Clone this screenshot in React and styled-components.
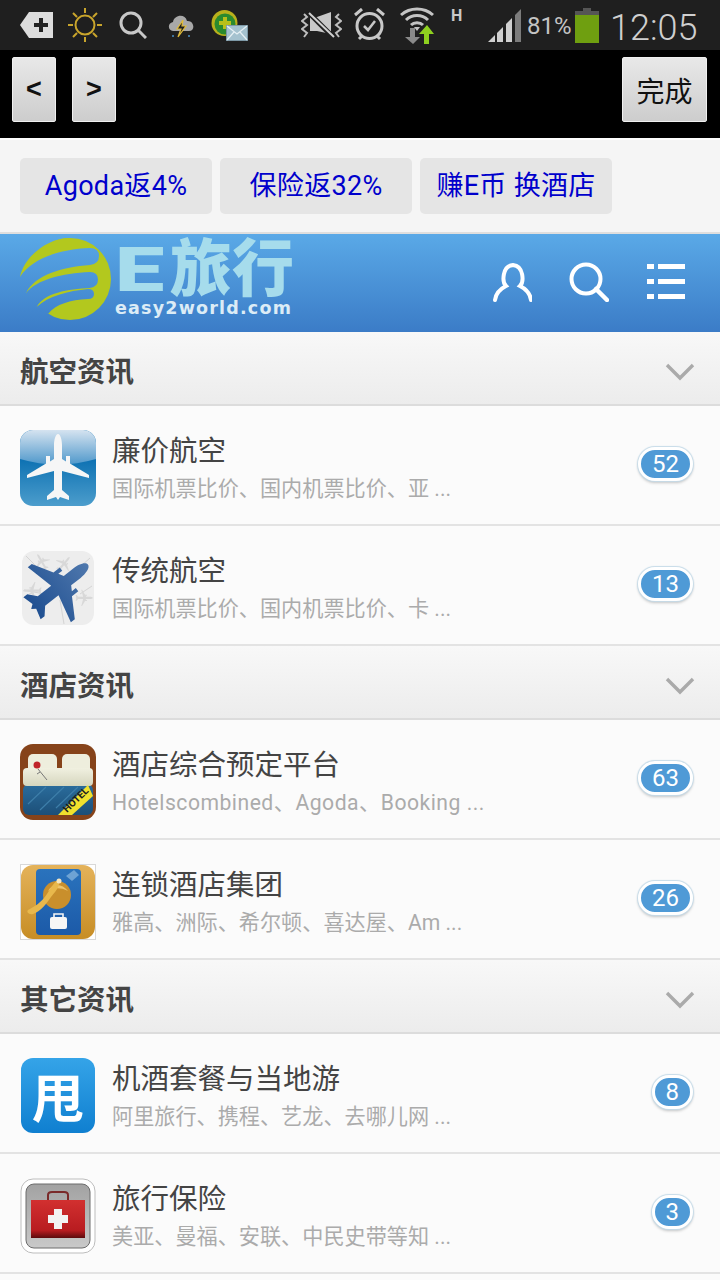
import React from "react";
import styled, { createGlobalStyle } from "styled-components";

const GlobalStyle = createGlobalStyle`
    html, body {
        margin: 0;
        padding: 0;
        background: #fbfbfb;
        font-family: Roboto, "Noto Sans CJK SC", sans-serif;
    }
`;

const Page = styled.div`
    width: 720px;
    height: 1280px;
    overflow: hidden;
    background: #fbfbfb;
`;

const StatusBar = styled.div`
    height: 50px;
    background: #1f1f1f;
    display: flex;
    align-items: center;
    padding-left: 20px;
`;

const StatusSvg = styled.svg`
    display: block;
    flex: none;
    margin-left: ${(p) => p.$ml || 0}px;
`;

const NetType = styled.span`
    align-self: flex-start;
    margin: 6px 0 0 17px;
    width: 12px;
    font-size: 16px;
    font-weight: 700;
    color: #c8c8c8;
`;

const Percent = styled.span`
    margin: 2px 0 0 5px;
    width: 43px;
    font-size: 24px;
    color: #c4c4c4;
    white-space: nowrap;
`;

const Clock = styled.span`
    margin: 6px 0 0 11px;
    font-size: 36px;
    font-weight: 300;
    color: #cfcfcf;
    white-space: nowrap;
`;

const Toolbar = styled.div`
    height: 88px;
    box-sizing: border-box;
    background: #000;
    display: flex;
    align-items: flex-start;
    gap: 16px;
    padding: 7px 13px 0 12px;
`;

const ToolButton = styled.button`
    height: 65px;
    width: ${(p) => p.$width}px;
    margin-left: ${(p) => (p.$push ? "auto" : "0")};
    padding: 0;
    border: 1px solid #f0f0f0;
    border-radius: 2px;
    background: linear-gradient(#e8e8e8, #cdcdcd);
    color: #111;
    font-family: "Liberation Sans", "Noto Sans CJK SC", sans-serif;
    font-size: ${(p) => p.$size}px;
    font-weight: ${(p) => p.$weight || 400};
`;

const PromoRow = styled.div`
    height: 96px;
    box-sizing: border-box;
    background: #f5f5f5;
    border-top: 2px solid #fff;
    border-bottom: 2px solid #dedede;
    display: flex;
    gap: 8px;
    padding: 18px 20px 0;
`;

const PromoLink = styled.a`
    width: 192px;
    height: 56px;
    box-sizing: border-box;
    padding-bottom: 5px;
    border-radius: 5px;
    background: #e5e5e5;
    color: #0000cc;
    font-size: 27px;
    letter-spacing: 0.3px;
    display: flex;
    align-items: center;
    justify-content: center;
    white-space: pre;
`;

const Header = styled.div`
    height: 98px;
    box-sizing: border-box;
    background: linear-gradient(#5aa9e7, #3b7cc7);
    display: flex;
    align-items: flex-start;
    padding: 4px 34px 0 20px;
`;

const LogoMark = styled.svg`
    display: block;
    flex: none;
`;

const LogoWords = styled.div`
    margin-left: 3px;
    width: 182px;
    display: flex;
    flex-direction: column;
`;

const LogoTitle = styled.div`
    height: 60px;
    line-height: 64px;
    font-size: 62px;
    font-weight: 900;
    color: #a6dcec;
    white-space: nowrap;
    display: flex;
`;

const LogoLetter = styled.span`
    display: block;
    width: 55px;
    transform: scaleX(1.42);
    transform-origin: left center;
`;

const LogoUrl = styled.div`
    margin-top: 1px;
    font-family: "DejaVu Sans", sans-serif;
    font-size: 17.5px;
    line-height: 18px;
    font-weight: 700;
    letter-spacing: 1.2px;
    color: #dcecf6;
    white-space: nowrap;
`;

const HeaderIcons = styled.div`
    margin-left: auto;
    margin-top: 24px;
    display: flex;
    gap: 37px;
`;

const SectionHead = styled.div`
    height: 74px;
    box-sizing: border-box;
    background: linear-gradient(#f8f8f8, #ececec);
    border-bottom: 2px solid #dcdcdc;
    display: flex;
    align-items: center;
    justify-content: space-between;
    padding: 8px 25px 0 20px;
`;

const SectionTitle = styled.h2`
    margin: 0 0 6px;
    font-size: 28.5px;
    font-weight: 700;
    color: #444;
`;

const Row = styled.div`
    height: 120px;
    box-sizing: border-box;
    border-bottom: 2px solid #e3e3e3;
    display: flex;
    align-items: center;
    padding: 6px 27px 0 20px;
`;

const RowIcon = styled.svg`
    display: block;
    flex: none;
    width: 76px;
    height: 76px;
`;

const RowText = styled.div`
    margin-left: 16px;
    flex: 1;
    min-width: 0;
`;

const RowTitle = styled.div`
    font-size: 28.5px;
    line-height: 40px;
    color: #444;
    white-space: nowrap;
`;

const RowSub = styled.div`
    font-size: 21.15px;
    line-height: 30px;
    margin-top: 2px;
    letter-spacing: ${(p) => (p.$latin ? "0.5px" : "0")};
    color: #ababab;
    white-space: nowrap;
`;

const Badge = styled.span`
    flex: none;
    height: 34px;
    box-sizing: border-box;
    margin-bottom: 8px;
    padding: 0 11px;
    border: 3px solid #fff;
    border-radius: 17px;
    background: #4f9ad6;
    color: #fff;
    font-size: 24px;
    line-height: 28px;
    box-shadow: 0 0 1px 1px #c6dbe8, 0 2px 3px rgba(0, 0, 0, 0.22);
`;

const PLANE = "M38 4C35.5 4 34 10 34 15V29L30 31.5V26H26V33.5L7 45V48L34 41V60L27 66V70L36 67L38 70L40 67L49 70V66L42 60V41L69 48V45L50 33.5V26H46V31.5L42 29V15C42 10 40.5 4 38 4Z";
const PLANE_WIDE = "M38 0C34 0 32 8 32 14V26L27 29V24H23V32L3 44V49L32 42V59L24 66V71L35 68L38 72L41 68L52 71V66L44 59V42L73 49V44L53 32V24H49V29L44 26V14C44 8 42 0 38 0Z";

const PlaneBlueIcon = () => (
    <RowIcon viewBox="0 0 76 76">
        <defs>
            <linearGradient id="pb" x1="0" y1="0" x2="0" y2="1">
                <stop offset="0.35" stopColor="#0a6fb1" />
                <stop offset="1" stopColor="#4c9dcc" />
            </linearGradient>
            <linearGradient id="pg" x1="0" y1="0" x2="0" y2="1">
                <stop offset="0" stopColor="#d5e3f0" />
                <stop offset="1" stopColor="#4f98cb" />
            </linearGradient>
        </defs>
        <rect width="76" height="76" rx="13" fill="url(#pb)" />
        <path d="M0 13A13 13 0 0 1 13 0H63A13 13 0 0 1 76 13V29Q38 40 0 29Z" fill="url(#pg)" />
        <path d={PLANE} fill="#f6f6f6" />
    </RowIcon>
);

const PlaneMapIcon = () => (
    <RowIcon viewBox="0 0 76 76">
        <defs>
            <linearGradient id="pm" x1="0" y1="0" x2="0" y2="1">
                <stop offset="0" stopColor="#4f78ad" />
                <stop offset="1" stopColor="#1f4f91" />
            </linearGradient>
        </defs>
        <rect x="2" y="1" width="72" height="74" rx="12" fill="#ededed" />
        <g fill="none" stroke="#d4d4d4" strokeWidth="1">
            <path d="M6 6L30 30M70 8L52 24M4 40L24 44M40 50L44 74M60 44L72 36" />
        </g>
        <g fill="#d8d8d8">
            <path d={PLANE} transform="translate(2 30) scale(.28) rotate(-90 38 38)" />
            <path d={PLANE} transform="translate(12 2) scale(.26) rotate(-30 38 38)" />
            <path d={PLANE} transform="translate(34 4) scale(.26) rotate(40 38 38)" />
            <path d={PLANE} transform="translate(54 38) scale(.26) rotate(90 38 38)" />
        </g>
        <path d={PLANE_WIDE} fill="url(#pm)" transform="rotate(52 38 38)" />
    </RowIcon>
);

const HotelBedIcon = () => (
    <RowIcon viewBox="0 0 76 76">
        <defs>
            <linearGradient id="hb" x1="0" y1="0" x2="0" y2="1">
                <stop offset="0" stopColor="#2b6d9d" />
                <stop offset="1" stopColor="#1c4f78" />
            </linearGradient>
            <linearGradient id="hm" x1="0" y1="0" x2="0" y2="1">
                <stop offset="0" stopColor="#f0f0e0" />
                <stop offset="1" stopColor="#d6d6be" />
            </linearGradient>
        </defs>
        <rect width="76" height="76" rx="13" fill="#86431a" />
        <rect x="8" y="10" width="29" height="22" rx="5" fill="#eeeedd" />
        <rect x="42" y="10" width="28" height="22" rx="5" fill="#eeeedd" />
        <rect x="3" y="40" width="70" height="31" rx="6" fill="url(#hb)" />
        <rect x="3" y="24" width="70" height="18" rx="4" fill="url(#hm)" />
        <g stroke="#3d7ea9" strokeWidth="1.2">
            <path d="M8 60L26 43M20 66L44 43M36 64L58 43" />
        </g>
        <circle cx="17" cy="21" r="3.5" fill="#c0242a" />
        <path d="M18 25L27 36M20 28L17 30" stroke="#777" strokeWidth="1" />
        <path d="M38 71H52L73 52L68 41Z" fill="#f1e12d" />
        <text x="0" y="0" transform="translate(47 69) rotate(-44)" fontSize="10" fontWeight="700" fontFamily="Roboto, sans-serif" fill="#1d1d1d">HOTEL</text>
    </RowIcon>
);

const DoorHangerIcon = () => (
    <RowIcon viewBox="0 0 76 76">
        <defs>
            <linearGradient id="dg" x1="0" y1="0" x2="0" y2="1">
                <stop offset="0" stopColor="#e4b25a" />
                <stop offset="1" stopColor="#c78d25" />
            </linearGradient>
            <linearGradient id="db" x1="0" y1="0" x2="0" y2="1">
                <stop offset="0" stopColor="#2a73bd" />
                <stop offset="1" stopColor="#1c5aa8" />
            </linearGradient>
        </defs>
        <rect x="0.5" y="0.5" width="75" height="75" fill="#fff" stroke="#d8d8d8" />
        <rect x="1" y="1" width="74" height="74" rx="12" fill="url(#dg)" />
        <rect x="16" y="5" width="45" height="66" rx="4" fill="url(#db)" />
        <circle cx="37" cy="31" r="14" fill="#c98f2c" />
        <path d="M28 27C32 19 42 19 48 27C40 23 33 24 28 27Z" fill="#edc46c" />
        <path d="M38 16C41 19 38 25 31 33C27 39 21 47 13 50C9 51 6 48 8 46C14 43 22 38 27 30C31 24 34 18 38 16Z" fill="#e8b84c" />
        <circle cx="39" cy="17" r="2.5" fill="#f4e6c0" />
        <rect x="30" y="53" width="17" height="12" rx="2" fill="#f6f6f6" />
        <path d="M34 53V50H43V53" fill="none" stroke="#f6f6f6" strokeWidth="1.6" />
        <path d="M46 12L54 6L59 11L52 17Z" fill="#6ea3d4" />
    </RowIcon>
);

const ShuaiIcon = () => (
    <RowIcon viewBox="0 0 76 76">
        <defs>
            <linearGradient id="sb" x1="0" y1="0" x2="0" y2="1">
                <stop offset="0" stopColor="#35a4e8" />
                <stop offset="1" stopColor="#0f7fd0" />
            </linearGradient>
        </defs>
        <rect x="1" y="0" width="74" height="75" rx="12" fill="url(#sb)" />
        <text x="38" y="60" textAnchor="middle" fontSize="52" fontWeight="700" fontFamily="'Noto Sans CJK SC', sans-serif" fill="#fff">甩</text>
    </RowIcon>
);

const MedicalIcon = () => (
    <RowIcon viewBox="0 0 76 76">
        <defs>
            <linearGradient id="mr" x1="0" y1="0" x2="0" y2="1">
                <stop offset="0" stopColor="#d23030" />
                <stop offset="0.8" stopColor="#b81c20" />
                <stop offset="1" stopColor="#5c0a0c" />
            </linearGradient>
            <linearGradient id="mg" x1="0" y1="0" x2="0" y2="1">
                <stop offset="0" stopColor="#a2a2a2" />
                <stop offset="1" stopColor="#c9c9c9" />
            </linearGradient>
        </defs>
        <rect x="1" y="1" width="74" height="74" rx="12" fill="#fff" stroke="#bdbdbd" />
        <rect x="6" y="6" width="64" height="64" rx="8" fill="url(#mg)" stroke="#6c6c6c" />
        <path d="M28 22V17C28 14.500 30 14 32 14H44C46 14 48 14.500 48 17V22" fill="none" stroke="#7a2a2a" strokeWidth="2" />
        <path d="M11 22H65V60H11Z" fill="url(#mr)" />
        <path d="M34 36H42V42H48V50H42V56H34V50H28V42H34Z" fill="#f3f3f3" transform="translate(0 -5)" />
    </RowIcon>
);

const Chevron = () => (
    <svg width="30" height="18" viewBox="0 0 30 18">
        <path d="M2 2L15 15L28 2" fill="none" stroke="#aaa" strokeWidth="3.4" />
    </svg>
);

const sections = [
    {
        title: "航空资讯",
        rows: [
            { Icon: PlaneBlueIcon, title: "廉价航空", sub: "国际机票比价、国内机票比价、亚 ...", count: 52 },
            { Icon: PlaneMapIcon, title: "传统航空", sub: "国际机票比价、国内机票比价、卡 ...", count: 13 },
        ],
    },
    {
        title: "酒店资讯",
        rows: [
            { Icon: HotelBedIcon, title: "酒店综合预定平台", sub: "Hotelscombined、Agoda、Booking ...", count: 63, latin: true },
            { Icon: DoorHangerIcon, title: "连锁酒店集团", sub: "雅高、洲际、希尔顿、喜达屋、Am ...", count: 26 },
        ],
    },
    {
        title: "其它资讯",
        rows: [
            { Icon: ShuaiIcon, title: "机酒套餐与当地游", sub: "阿里旅行、携程、艺龙、去哪儿网 ...", count: 8 },
            { Icon: MedicalIcon, title: "旅行保险", sub: "美亚、曼福、安联、中民史带等知 ...", count: 3 },
        ],
    },
];

const StatusIcons = () => (
    <>
        <StatusSvg width="34" height="28" viewBox="0 0 34 28">
            <path d="M9 1H33V27H9L0 14Z" fill="#dcdcdc" />
            <path d="M21 7V21M14 14H28" stroke="#222" strokeWidth="4" />
        </StatusSvg>
        <StatusSvg $ml={14} width="34" height="34" viewBox="0 0 34 34">
            <g stroke="#c9a52c" strokeWidth="2" fill="none">
                <circle cx="17" cy="17" r="9.500" />
                <path d="M17 0V5M17 29V34M0 17H5M29 17H34M5 5L9 9M25 25L29 29M29 5L25 9M9 25L5 29" />
            </g>
        </StatusSvg>
        <StatusSvg $ml={17} width="28" height="28" viewBox="0 0 28 28">
            <circle cx="12" cy="12" r="10" fill="none" stroke="#c8c8c8" strokeWidth="3" />
            <path d="M19 19L27 27" stroke="#c8c8c8" strokeWidth="3" />
        </StatusSvg>
        <StatusSvg $ml={20} width="28" height="28" viewBox="0 0 28 28">
            <path d="M6 20C1 20 0 12 6 11C7 4 18 2 20 10C27 9 29 20 22 20Z" fill="#a8a8a8" />
            <path d="M16 9L10 18H14L11 26L19 15H15Z" fill="#1f1f1f" stroke="#e0bb3a" strokeWidth="1.200" />
            <path d="M6 24V26M22 24V26" stroke="#4a90c8" strokeWidth="1.500" />
        </StatusSvg>
        <StatusSvg $ml={16} width="37" height="31" viewBox="0 0 37 31">
            <circle cx="13.500" cy="13" r="13" fill="#b9b01c" />
            <circle cx="14" cy="14" r="10.500" fill="#2b8a2e" />
            <path d="M14 7V19M8 13H20" stroke="#b9c01a" strokeWidth="4" />
            <rect x="15.500" y="15.500" width="21" height="15" fill="#a5c2cf" stroke="#7d98a6" />
            <path d="M16 16L26 24L36 16M16 30L23 22M36 30L29 22" fill="none" stroke="#e6f0f4" strokeWidth="1.200" />
        </StatusSvg>
        <StatusSvg $ml={53} width="41" height="26" viewBox="0 0 41 26">
            <g fill="none" stroke="#bdbdbd" strokeWidth="2">
                <path d="M3 2L6 5L1 9L6 13L1 17L6 21L3 25M38 2L35 5L40 9L35 13L40 17L35 21L38 25" />
            </g>
            <path d="M9 5H16L30 0V22L16 19H9Z" fill="#c8c8c8" />
            <path d="M8 1L33 26" stroke="#1f1f1f" strokeWidth="5" />
            <path d="M8 1L33 25" stroke="#d0d0d0" strokeWidth="2" />
        </StatusSvg>
        <StatusSvg $ml={12} width="31" height="34" viewBox="0 0 31 34">
            <circle cx="15.500" cy="18" r="12.500" fill="none" stroke="#c8c8c8" strokeWidth="3" />
            <path d="M1 7L8 1M30 7L23 1M5 31L8 28M26 31L23 28" stroke="#c8c8c8" strokeWidth="3" />
            <path d="M10 18L14 22L21 13" fill="none" stroke="#c8c8c8" strokeWidth="2.500" />
        </StatusSvg>
        <StatusSvg $ml={15} width="34" height="37" viewBox="0 0 34 37">
            <g fill="none" stroke="#c4c4c4" strokeWidth="3">
                <path d="M1 8C10 0 24 0 33 8M6 13C12 7 22 7 28 13M11 18C14 15 20 15 23 18" />
            </g>
            <path d="M17 24L14 20H20Z" fill="#c4c4c4" />
            <path d="M10 21V30H5L13 37L20 30H15V21Z" fill="#8a8a8a" />
            <path d="M24 37V27H19L27 18L34 27H29V37Z" fill="#8ed01f" />
        </StatusSvg>
        <NetType>H</NetType>
        <StatusSvg $ml={25} width="34" height="33" viewBox="0 0 34 33">
            <path d="M0 33L7 26V33Z" fill="#d0d0d0" />
            <path d="M9 24L15 18V33H9Z" fill="#d0d0d0" />
            <path d="M18 15L24 9V33H18Z" fill="#d0d0d0" />
            <path d="M27 6L33 0V33H27Z" fill="#7c7c7c" />
        </StatusSvg>
        <Percent>81%</Percent>
        <StatusSvg $ml={5} width="24" height="35" viewBox="0 0 24 35">
            <rect x="8" y="0" width="8" height="3" fill="#555" />
            <rect x="0" y="3" width="24" height="4" fill="#555" />
            <rect x="0" y="7" width="24" height="28" fill="#6f9f10" />
        </StatusSvg>
        <Clock>12:05</Clock>
    </>
);

const Logo = () => (
    <LogoMark width="92" height="84" viewBox="0 0 92 84">
        <defs>
            <linearGradient id="lb" gradientUnits="userSpaceOnUse" x1="0" y1="-4" x2="0" y2="94">
                <stop offset="0" stopColor="#5aa9e7" />
                <stop offset="1" stopColor="#3b7cc7" />
            </linearGradient>
        </defs>
        <g fill="#b3c81e">
            <circle cx="50" cy="41" r="41" />
            <path d="M0 39C4 18 28 0 50 0V20Z" />
            <path d="M6 55C10 32 30 24 55 24V50Z" />
            <path d="M16.700 69C20 52 40 45 55 45V56Z" />
        </g>
        <g fill="url(#lb)">
            <path d="M0 39C10 22 38 11 70 10Q79 10 79 18Q79 26 70 27C42 29 15 37 6 55Z" />
            <path d="M6 55C16 42 42 35 70 34Q78 34 78 41.500Q78 49 70 50C48 51 24 55 16.700 69Z" />
            <path d="M16.700 69C28 58 48 53 68 51Q74 51 74 56Q74 61 68 61C50 62 36 66 28 76Z" />
        </g>
    </LogoMark>
);

const HeaderActions = () => (
    <HeaderIcons>
        <svg width="40" height="40" viewBox="0 0 40 40">
            <g fill="none" stroke="#fff" strokeWidth="4" strokeLinecap="round">
                <path d="M3 38C4 30 10 26 14 24C10 20 10 4 21 3C32 4 32 20 28 24C32 26 38 30 39 38" />
            </g>
        </svg>
        <svg width="40" height="40" viewBox="0 0 40 40">
            <circle cx="17" cy="17" r="14.500" fill="none" stroke="#fff" strokeWidth="4" />
            <path d="M27 27L38 38" stroke="#fff" strokeWidth="4.500" strokeLinecap="round" />
        </svg>
        <svg width="40" height="40" viewBox="0 0 40 40">
            <g fill="#fff">
                <rect x="1" y="2" width="7" height="5" />
                <rect x="12" y="2" width="27" height="5" />
                <rect x="1" y="17" width="7" height="5" />
                <rect x="12" y="17" width="27" height="5" />
                <rect x="1" y="32" width="7" height="5" />
                <rect x="12" y="32" width="27" height="5" />
            </g>
        </svg>
    </HeaderIcons>
);

export default function App() {
    return (
        <Page>
            <GlobalStyle />
            <StatusBar>
                <StatusIcons />
            </StatusBar>
            <Toolbar>
                <ToolButton $width={44} $size={27} $weight={700}>&lt;</ToolButton>
                <ToolButton $width={44} $size={27} $weight={700}>&gt;</ToolButton>
                <ToolButton $width={85} $size={28} $push>完成</ToolButton>
            </Toolbar>
            <PromoRow>
                <PromoLink>Agoda返4%</PromoLink>
                <PromoLink>保险返32%</PromoLink>
                <PromoLink>赚E币 换酒店</PromoLink>
            </PromoRow>
            <Header>
                <Logo />
                <LogoWords>
                    <LogoTitle><LogoLetter>E</LogoLetter>旅行</LogoTitle>
                    <LogoUrl>easy2world.com</LogoUrl>
                </LogoWords>
                <HeaderActions />
            </Header>
            {sections.map((section) => (
                <div key={section.title}>
                    <SectionHead>
                        <SectionTitle>{section.title}</SectionTitle>
                        <Chevron />
                    </SectionHead>
                    {section.rows.map(({ Icon, title, sub, count, latin }) => (
                        <Row key={title}>
                            <Icon />
                            <RowText>
                                <RowTitle>{title}</RowTitle>
                                <RowSub $latin={latin}>{sub}</RowSub>
                            </RowText>
                            <Badge>{count}</Badge>
                        </Row>
                    ))}
                </div>
            ))}
        </Page>
    );
}
